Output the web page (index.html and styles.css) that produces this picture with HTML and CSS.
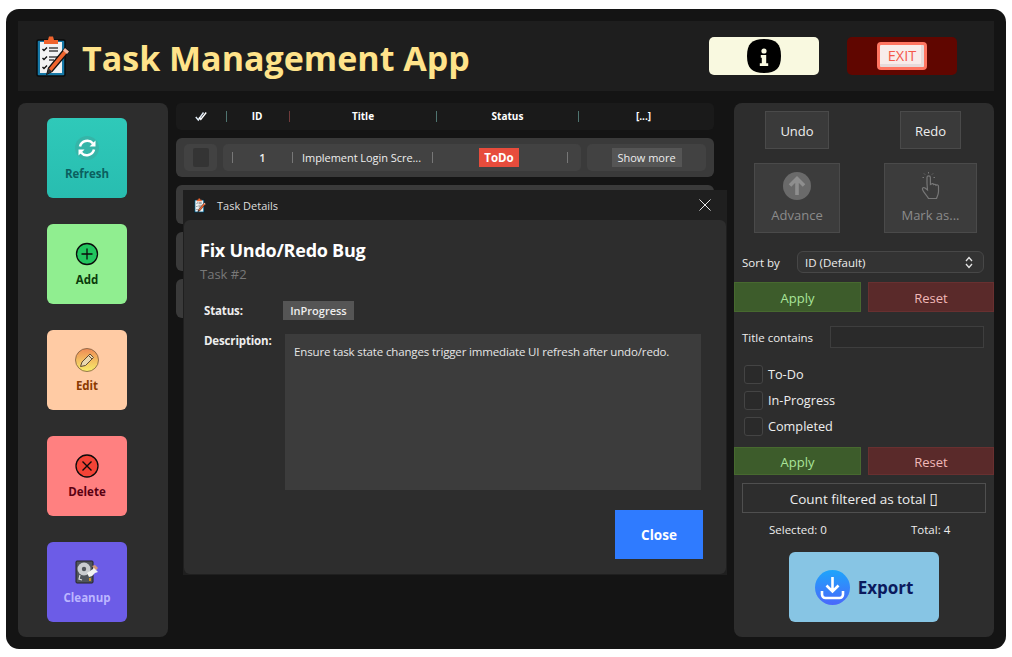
FILE: index.html
```html
<!DOCTYPE html>
<html lang="en">
<head>
<meta charset="utf-8">
<title>Task Management App</title>
<link rel="stylesheet" href="styles.css">
</head>
<body>
<svg class="defs" width="0" height="0" aria-hidden="true">
  <symbol id="clip" viewBox="0 0 34 42">
    <rect x="1" y="5" width="28" height="36" rx="1.5" fill="#1679a8" stroke="#0b0b0b" stroke-width="1.5"/>
    <rect x="4" y="7" width="22" height="31" fill="#f2f2f2"/>
    <path d="M8 7 L8 5 L12 5 L13 1.5 L17 1.5 L18 5 L22 5 L22 9 L8 9 Z" fill="#f0642d"/>
    <path d="M6.5 14l1.5 1.5 3-3M6.5 23l1.5 1.5 3-3M6.5 32l1.5 1.5 3-3" fill="none" stroke="#111" stroke-width="1.4"/>
    <path d="M13 13h9M13 16h9M13 22h9M13 25h5" stroke="#444" stroke-width="1.5"/>
    <path d="M11 39 L12.5 33 L29 13 L33 16.5 L16 36.5 Z" fill="#f0642d" stroke="#111" stroke-width="1.3"/>
    <path d="M27 15.5 L29 13 L33 16.5 L31 19 Z" fill="#f4b6a0"/>
    <path d="M11 39 L12.5 33 L16 36.5 Z" fill="#333"/>
  </symbol>
</svg>
<div class="app">
  <header class="header">
    <svg class="logo"><use href="#clip"/></svg>
    <h1 class="app-title">Task Management App</h1>
    <div class="header-actions">
      <button class="top-btn info-btn" aria-label="Info">
        <svg width="34" height="34" viewBox="0 0 34 34">
          <path d="M17 0C29 0 34 5 34 17S29 34 17 34 0 29 0 17 5 0 17 0Z" fill="#000"/>
          <circle cx="17" cy="12" r="2.600" fill="#f9f9e0"/>
          <path d="M13.800 16h5.400v8.200h2v2.800h-8.400v-2.800h2v-5.400h-1Z" fill="#f9f9e0"/>
        </svg>
      </button>
      <button class="top-btn exit-btn" aria-label="Exit">
        <span class="exit-sign">EXIT</span>
      </button>
    </div>
  </header>
  <main class="main">
    <aside class="side">
      <button class="tool tool-refresh">
        <svg class="tool-icon" viewBox="0 0 24 24">
          <circle cx="12" cy="12" r="12" fill="#35b5a8"/>
          <path d="M5 10.500A7.500 7.500 0 0 1 18 7.500M19 13.500A7.500 7.500 0 0 1 6 16.500" fill="none" stroke="#fff" stroke-width="2.600"/>
          <path d="M20.500 4.500v6h-6ZM3.500 19.500v-6h6Z" fill="#fff"/>
        </svg>
        <span>Refresh</span>
      </button>
      <button class="tool tool-add">
        <svg class="tool-icon" viewBox="0 0 24 24">
          <circle cx="12" cy="12" r="10.500" fill="#22c55e" stroke="#0b0b0b" stroke-width="1.300"/>
          <path d="M12 6.500v11M6.500 12h11" stroke="#0b0b0b" stroke-width="1.300"/>
        </svg>
        <span>Add</span>
      </button>
      <button class="tool tool-edit">
        <svg class="tool-icon" viewBox="0 0 24 24">
          <defs><linearGradient id="edit-g" x1="0" y1="0" x2="0" y2="1"><stop offset="0" stop-color="#ee8a55"/><stop offset="1" stop-color="#f8ee6a"/></linearGradient></defs>
          <circle cx="12" cy="12" r="11.500" fill="url(#edit-g)" stroke="#7a5a3e" stroke-width=".8"/>
          <path d="M5.500 18.500 L7 14 L15 6 L18.500 9.500 L10.500 17.500 Z" fill="#ead9b0" stroke="#5f4a35" stroke-width="1"/>
          <path d="M13.500 7.500 L17 11" stroke="#5f4a35"/>
        </svg>
        <span>Edit</span>
      </button>
      <button class="tool tool-delete">
        <svg class="tool-icon" viewBox="0 0 24 24">
          <circle cx="12" cy="12" r="11" fill="#f44336" stroke="#0b0b0b" stroke-width="1.300"/>
          <path d="M7.500 7.500l9 9M16.500 7.500l-9 9" stroke="#0b0b0b" stroke-width="1.400"/>
        </svg>
        <span>Delete</span>
      </button>
      <button class="tool tool-cleanup">
        <svg class="tool-icon" viewBox="0 0 24 24">
          <rect x="1" y="1" width="17" height="22" rx="1" fill="#50555c" stroke="#222" stroke-width="1"/>
          <circle cx="9" cy="9" r="6.500" fill="#c9ccd0"/>
          <circle cx="9" cy="9" r="2.200" fill="#50555c"/>
          <path d="M5 15l-1 4 3 1" fill="none" stroke="#ddd" stroke-width="1.200"/>
          <path d="M12 13l6-4 1-3 3 2-1 2 2 2-3 1-3 3-3 1Z" fill="#f2f2f2"/>
          <path d="M17 6l3-1 3 3-2 2Z" fill="#d39a78"/>
          <path d="M15 18l0 3" stroke="#f0a818" stroke-width="1.500"/>
        </svg>
        <span>Cleanup</span>
      </button>
    </aside>

    <section class="list">
      <div class="list-head">
        <span class="hcell hcell-check">
          <svg width="12" height="11" viewBox="0 0 12 11"><path d="M.8 6l2.500 3L8.500 1.500" fill="none" stroke="#dfeaf5" stroke-width="1.400"/><path d="M4 6.500l1.800 2L11.200 1.500" fill="none" stroke="#fff" stroke-width="1.400"/></svg>
        </span>
        <span class="hcell hcell-id sep-teal">ID</span>
        <span class="hcell hcell-title sep-red">Title</span>
        <span class="hcell hcell-status sep-teal">Status</span>
        <span class="hcell hcell-more sep-teal">[...]</span>
      </div>
      <div class="row">
        <div class="row-check"><span class="row-box"></span></div>
        <div class="row-data">
          <span class="dcell dcell-id">1</span>
          <span class="dcell dcell-title">Implement Login Scre...</span>
          <span class="dcell dcell-status"><span class="todo">ToDo</span></span>
          <span class="dcell dcell-end"></span>
        </div>
        <div class="row-more"><button class="more-btn">Show more</button></div>
      </div>
      <div class="row"></div>
      <div class="row"></div>
      <div class="row"></div>

      <div class="dialog">
        <div class="dialog-bar">
          <svg class="dialog-icon"><use href="#clip"/></svg>
          <span class="dialog-name">Task Details</span>
          <svg class="dialog-x" width="12" height="12" viewBox="0 0 12 12"><path d="M.5 .5l11 11M11.500 .5l-11 11" stroke="#e8e8e8" stroke-width="1"/></svg>
        </div>
        <div class="dialog-body">
          <h2 class="task-name">Fix Undo/Redo Bug</h2>
          <div class="task-num">Task #2</div>
          <div class="status-line">
            <span class="field-label">Status:</span>
            <span class="status-badge">InProgress</span>
          </div>
          <div class="desc-line">
            <span class="field-label desc-label">Description:</span>
            <div class="desc-box">Ensure task state changes trigger immediate UI refresh after undo/redo.</div>
          </div>
          <div class="dialog-foot"><button class="close-btn">Close</button></div>
        </div>
      </div>
    </section>

    <aside class="panel">
      <div class="undo-row">
        <button class="ghost undo">Undo</button>
        <button class="ghost redo">Redo</button>
      </div>
      <div class="action-row">
        <button class="action advance">
          <svg width="28" height="28" viewBox="0 0 28 28">
            <circle cx="14" cy="14" r="14" fill="#6a6a6a"/>
            <path d="M14 23V7M7 13.500L14 6.500l7 7" fill="none" stroke="#8e8e8e" stroke-width="3.600"/>
          </svg>
          <span>Advance</span>
        </button>
        <button class="action mark">
          <svg width="28" height="28" viewBox="0 0 28 28">
            <path d="M10 11.500V5.500a1.700 1.700 0 0 1 3.400 0v7l1-.6a1.500 1.500 0 0 1 2.300.7 1.500 1.500 0 0 1 2.300.7 1.500 1.500 0 0 1 2.500 1.200v5c0 3-1.500 5-2 7h-8c-1-2.500-5-6-6-9-.5-1.500 1-2.500 2.500-1.500l2.500 2Z" fill="none" stroke="#777" stroke-width="1.200"/>
            <path d="M11.500 0v1.500M7 1.500l1 1M16 1.500l-1 1M5.500 5.500H7M16.500 5.500H18" stroke="#777" stroke-width="1"/>
          </svg>
          <span>Mark as...</span>
        </button>
      </div>
      <div class="sort-row">
        <span class="lbl">Sort by</span>
        <div class="select">
          <span>ID (Default)</span>
          <svg width="8" height="13" viewBox="0 0 8 13"><path d="M1 5l3-3.500L7 5M1 8l3 3.500L7 8" fill="none" stroke="#e6e6e6" stroke-width="1.300"/></svg>
        </div>
      </div>
      <div class="pair pair-sort">
        <button class="apply">Apply</button>
        <button class="reset">Reset</button>
      </div>
      <div class="title-row">
        <span class="lbl">Title contains</span>
        <span class="title-input"></span>
      </div>
      <div class="checks">
        <label class="check"><span class="box"></span>To-Do</label>
        <label class="check"><span class="box"></span>In-Progress</label>
        <label class="check"><span class="box"></span>Completed</label>
      </div>
      <div class="pair pair-filter">
        <button class="apply">Apply</button>
        <button class="reset">Reset</button>
      </div>
      <button class="count">Count filtered as total <span class="tofu">▯</span></button>
      <div class="totals">
        <span>Selected: 0</span>
        <span>Total: 4</span>
      </div>
      <button class="export">
        <svg width="35" height="35" viewBox="0 0 35 35">
          <defs><linearGradient id="exp-g" x1="0" y1="0" x2="0" y2="1"><stop offset="0" stop-color="#1ea5fb"/><stop offset="1" stop-color="#4a68fb"/></linearGradient></defs>
          <circle cx="17.500" cy="17.500" r="17.500" fill="url(#exp-g)"/>
          <path d="M17.500 7v14M11.500 15.500l6 6 6-6" fill="none" stroke="#fff" stroke-width="2.600"/>
          <path d="M7 21v3.500a3.500 3.500 0 0 0 3.500 3.500h14a3.500 3.500 0 0 0 3.500-3.500V21" fill="none" stroke="#fff" stroke-width="2.600"/>
        </svg>
        <span>Export</span>
      </button>
    </aside>
  </main>
</div>
</body>
</html>
```
FILE: styles.css
```css
* { box-sizing: border-box; }
html, body { margin: 0; padding: 0; background: #fff; }
body { font-family: "Open Sans", "Noto Sans", sans-serif; color: #f0f0f0; overflow: hidden; }
button { font-family: inherit; border: 0; padding: 0; margin: 0; }
.defs { position: absolute; }

.app { width: 1000px; height: 640px; margin: 9px 0 0 6px; padding: 12px; background: #141414; border-radius: 13px; display: flex; flex-direction: column; gap: 12px; }

.header { height: 70px; background: #1e1e1e; display: flex; align-items: center; padding: 0 37px 0 18px; }
.logo { width: 34px; height: 42px; margin-right: 12px; }
.app-title { margin: 4px 0 0; font-size: 34px; font-weight: 700; color: #ffe38a; letter-spacing: 0; line-height: 40px; }
.header-actions { margin-left: auto; display: flex; gap: 28px; }
.top-btn { width: 110px; height: 38px; border-radius: 5px; display: flex; align-items: center; justify-content: center; }
.info-btn { background: #f9f9e0; }
.exit-btn { background: #600600; }
.exit-sign { width: 50px; height: 28px; background: #f8ecea; border: 3px solid #ff7561; border-radius: 4px; color: #f4584a; font-size: 14.500px; font-weight: 500; line-height: 22px; text-align: center; box-shadow: inset -3px -3px 0 #e6dbdb; }

.main { flex: 1; display: flex; min-height: 0; }
.side { width: 150px; background: #2d2d2d; border-radius: 8px; padding: 15px 0 0 29px; display: flex; flex-direction: column; align-items: flex-start; gap: 26px; }
.tool { width: 80px; height: 80px; border-radius: 6px; display: flex; flex-direction: column; align-items: center; padding-top: 18px; font-size: 11.500px; font-weight: 700; line-height: 16px; gap: 6px; }
.tool-icon { width: 24px; height: 24px; }
.tool-refresh { background: linear-gradient(#2fc9b9, #28bdb0); color: #0b5f5f; }
.tool-add { background: #90ee90; color: #0b3b0b; }
.tool-edit { background: #ffcba4; color: #8a3a00; }
.tool-delete { background: #ff8080; color: #5a0012; }
.tool-cleanup { background: #6c5ce7; color: #bcb6ff; }

.list { width: 538px; margin: 0 20px 0 8px; position: relative; display: flex; flex-direction: column; gap: 8px; }
.list-head { height: 27px; background: #1a1a1a; border-radius: 5px; display: grid; grid-template-columns: 50px 63px 147px 142px 136px; align-items: center; font-size: 10px; font-weight: 700; color: #fff; }
.hcell { height: 11px; line-height: 11px; text-align: center; display: block; }
.hcell-check { line-height: 0; }
.hcell-id { padding-right: 2px; }
.hcell-more { padding-right: 6px; }
.sep-teal { border-left: 1px solid #4f7470; }
.sep-red { border-left: 1px solid #6f3a3a; }
.row { height: 39px; background: #3a3a3a; border-radius: 6px; padding: 6px 8px; display: flex; gap: 6px; }
.row-check { width: 33px; background: #424242; border-radius: 5px; display: flex; align-items: center; justify-content: center; }
.row-box { width: 16px; height: 19px; background: #343434; border-radius: 2px; }
.row-data { width: 358px; background: #424242; border-radius: 5px; display: grid; grid-template-columns: 60px 140px 135px 14px; padding-left: 9px; align-items: center; font-size: 11px; color: #eee; }
.dcell { height: 11px; line-height: 11px; border-left: 1px solid #777; display: block; }
.dcell-id { text-align: center; font-weight: 600; }
.dcell-title { padding-left: 9px; white-space: nowrap; letter-spacing: -.05px; }
.dcell-status { display: flex; justify-content: center; align-items: center; padding-right: 2px; }
.todo { width: 40px; height: 19px; background: #e74c3c; color: #fff; font-weight: 700; font-size: 11.500px; line-height: 19px; text-align: center; flex: none; }
.row-more { width: 119px; background: #424242; border-radius: 5px; display: flex; align-items: center; justify-content: center; }
.more-btn { width: 70px; height: 19px; background: #555; color: #eee; font-size: 11px; }

.dialog { position: absolute; left: 7px; top: 87px; width: 544px; height: 385px; background: #1f1f1f; display: flex; flex-direction: column; }
.dialog-bar { height: 30px; flex: none; display: flex; align-items: center; padding: 0 16px 0 11px; }
.dialog-icon { width: 12px; height: 15px; margin-right: 11px; }
.dialog-name { font-size: 11px; color: #ddd; }
.dialog-x { margin-left: auto; }
.dialog-body { flex: 1; margin: 0 1px 1px; background: #2d2d2d; border-radius: 6px; padding: 19px 23px 15px 16px; display: flex; flex-direction: column; }
.task-name { margin: 0; font-size: 18px; line-height: 22px; font-weight: 700; color: #fff; letter-spacing: -.25px; }
.task-num { font-size: 13px; line-height: 18px; color: #787878; margin-top: 4px; }
.status-line { display: flex; align-items: center; margin-top: 18px; padding-left: 4px; height: 19px; }
.field-label { font-size: 11.500px; font-weight: 700; color: #eee; width: 79px; flex: none; letter-spacing: -.15px; }
.status-badge { width: 71px; height: 19px; background: #555; font-size: 11px; font-weight: 600; line-height: 19px; text-align: center; color: #eee; }
.desc-line { display: flex; margin-top: 14px; padding-left: 4px; height: 156px; }
.desc-label { width: 81px; line-height: 14px; }
.desc-box { width: 416px; background: #3c3c3c; padding: 10px 9px; font-size: 11.500px; letter-spacing: -.15px; line-height: 16px; color: #e6e6e6; white-space: nowrap; }
.dialog-foot { display: flex; justify-content: flex-end; margin-top: 20px; }
.close-btn { width: 88px; height: 49px; background: #2f7bff; color: #fff; font-size: 13.500px; font-weight: 700; }

.panel { width: 260px; background: #2d2d2d; border-radius: 8px; padding-top: 8px; display: flex; flex-direction: column; font-size: 12px; color: #eee; }
.ghost { height: 38px; background: #3a3a3a; border: 1px solid #4a4a4a; color: #eee; font-size: 13px; padding-top: 2px; }
.undo-row { display: flex; padding-left: 31px; }
.undo { width: 64px; }
.redo { width: 61px; margin-left: 71px; }
.action-row { display: flex; padding-left: 20px; margin-top: 14px; }
.action { height: 70px; background: #3c3c3c; border: 1px solid #4a4a4a; color: #8b8b8b; font-size: 13px; display: flex; flex-direction: column; align-items: center; padding-top: 8px; gap: 6px; line-height: 19px; }
.advance { width: 86px; }
.mark { width: 93px; margin-left: 44px; }
.sort-row { display: flex; align-items: center; padding: 0 10px 0 8px; margin-top: 18px; height: 22px; }
.lbl { font-size: 11.500px; color: #eee; }
.sort-row .lbl { width: 55px; }
.select { flex: 1; height: 22px; background: #333; border: 1px solid #474747; border-radius: 6px; display: flex; align-items: center; justify-content: space-between; padding: 0 10px 0 7px; font-size: 11.500px; }
.pair { display: flex; justify-content: space-between; }
.pair button { font-size: 13px; width: 126px; padding-top: 2px; }
.pair .apply { width: 127px; background: #3d5c2b; color: #a9e59a; border: 1px solid #47692f; }
.pair .reset { background: #5a2a2a; color: #f0b8b8; border: 1px solid #683030; }
.pair-sort { margin-top: 9px; }
.pair-sort button { height: 30px; }
.title-row { display: flex; align-items: center; padding: 0 10px 0 8px; margin-top: 14px; height: 22px; }
.title-row .lbl { width: 88px; }
.title-input { flex: 1; height: 22px; background: #2a2a2a; border: 1px solid #3e3e3e; }
.checks { display: flex; flex-direction: column; gap: 7px; padding-left: 10px; margin-top: 17px; }
.check { display: flex; align-items: center; gap: 5px; height: 19px; font-size: 12.700px; line-height: 19px; }
.box { width: 19px; height: 19px; background: #2a2a2a; border: 1px solid #444; border-radius: 3px; }
.pair-filter { margin-top: 11px; }
.pair-filter button { height: 28px; }
.count { width: 244px; height: 30px; margin: 8px 0 0 8px; background: #2d2d2d; border: 1px solid #4f4f4f; color: #eee; font-size: 13.500px; flex: none; padding-top: 1px; }
.tofu { font-family: "DejaVu Sans", sans-serif; font-size: 16px; line-height: 0; }
.totals { display: flex; padding-left: 35px; margin-top: 9px; font-size: 11.500px; line-height: 16px; height: 16px; }
.totals span:first-child { width: 142px; }
.export { width: 150px; height: 70px; margin: 14px 0 0 55px; background: #87c5e4; border-radius: 6px; color: #0b1a5e; font-size: 17px; font-weight: 700; display: flex; align-items: center; justify-content: center; gap: 8px; flex: none; }
```
